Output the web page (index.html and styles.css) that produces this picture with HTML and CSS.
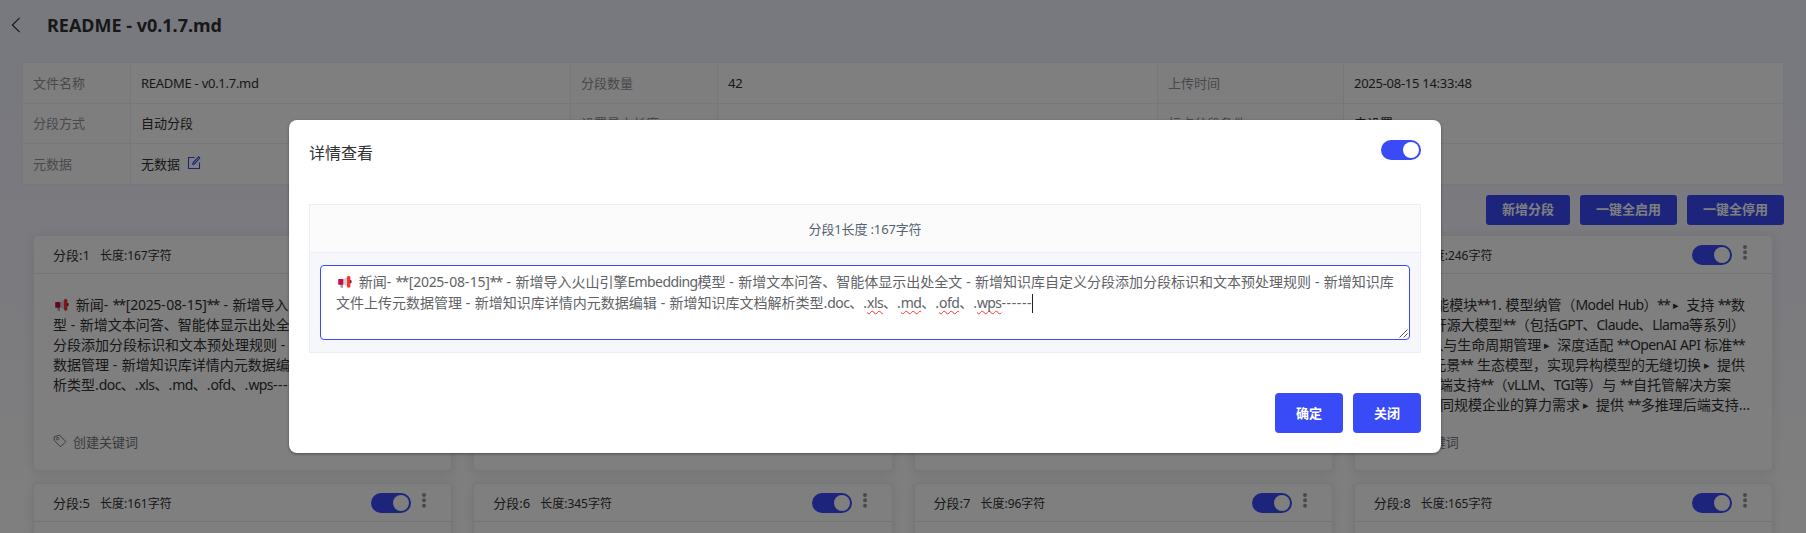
FILE: index.html
```html
<!DOCTYPE html>
<html lang="zh-CN">
<head>
<meta charset="utf-8">
<title>README - v0.1.7.md</title>
<link rel="stylesheet" href="styles.css">
</head>
<body>
<svg class="defs" width="0" height="0">
  <symbol id="horn" viewBox="0 0 15 15">
    <path d="M2.8 9.5h2.6l.6 4.2H3.6z" fill="#9a9a9a"/>
    <path d="M6 4.5 12 1.2v11.6L6 10z" fill="#d0d0d0"/>
    <rect x=".8" y="4.2" width="5.4" height="6.2" rx=".6" fill="#ca0b4a"/>
    <rect x="13" y="5.4" width="2" height="3.4" rx="1" fill="#212121"/>
    <rect x="10.2" y="1" width="3.6" height="12.6" rx="1.6" fill="#f8312f"/>
  </symbol>
  <symbol id="tag" viewBox="0 0 14 14">
    <path d="M1.2 2.8 6.6 1.2 12.8 7.6 7.6 12.8 1.2 6.4z M4.6 3.4a1.3 1.3 0 1 0 .01 0z" fill="none" stroke="#73767a" stroke-width="1"/>
  </symbol>
  <symbol id="dots" viewBox="0 0 4 15">
    <circle cx="2" cy="2" r="2"/><circle cx="2" cy="7.3" r="2"/><circle cx="2" cy="12.7" r="2"/>
  </symbol>
</svg>

<div class="page">
  <header class="topbar">
    <svg class="back" width="10" height="16" viewBox="0 0 10 16"><path d="M8.6.8 1.4 8l7.2 7.2" fill="none" stroke="#303133" stroke-width="1.2"/></svg>
    <h1>README - v0.1.7.md</h1>
  </header>

  <div class="info">
    <div class="key">文件名称</div><div class="latin">README - v0.1.7.md</div><div class="key">分段数量</div><div class="latin">42</div><div class="key">上传时间</div><div class="latin">2025-08-15 14:33:48</div>
    <div class="key">分段方式</div><div>自动分段</div><div class="key">设置最大长度</div><div></div><div class="key">标点分段条件</div><div>未设置</div>
    <div class="key">元数据</div><div class="wide">无数据<svg class="edit" width="14" height="14" viewBox="0 0 14 14"><path d="M7.5 1.5h-6v11h11v-6M5.8 8.4 6.2 6.6 11.6.9l1.2 1.2-5.4 5.8z" fill="none" stroke="#384bf7" stroke-width="1.1"/></svg></div>
  </div>

  <div class="actions"><button>新增分段</button><button>一键全启用</button><button>一键全停用</button></div>

  <main class="cards">
    <section class="card">
      <div class="head"><b>分段:1</b><i>长度:167字符</i><span class="switch"></span><svg class="more"><use href="#dots"/></svg></div>
      <div class="text">
        <div><svg class="horn"><use href="#horn"/></svg> 新闻- **[2025-08-15]** - 新增导入火山引擎</div>
        <div>型 - 新增文本问答、智能体显示出处全文</div>
        <div>分段添加分段标识和文本预处理规则 - 新增</div>
        <div>数据管理 - 新增知识库详情内元数据编辑</div>
        <div>析类型.doc、.xls、.md、.ofd、.wps------</div>
      </div>
      <div class="foot"><svg class="tag"><use href="#tag"/></svg>创建关键词</div>
    </section>
    <section class="card"></section>
    <section class="card"></section>
    <section class="card">
      <div class="head"><b>分段:4</b><i>长度:246字符</i><span class="switch"></span><svg class="more"><use href="#dots"/></svg></div>
      <div class="text tail">
        <div>功能模块**1. 模型纳管（Model Hub）**<em>▸</em>支持 **数</div>
        <div>开源大模型**（包括GPT、Claude、Llama等系列）</div>
        <div>入与生命周期管理<em>▸</em>深度适配 **OpenAI API 标准**</div>
        <div>元景** 生态模型，实现异构模型的无缝切换<em>▸</em>提供</div>
        <div>后端支持**（vLLM、TGI等）与 **自托管解决方案</div>
        <div>不同规模企业的算力需求<em>▸</em>提供 **多推理后端支持...</div>
      </div>
      <div class="foot"><svg class="tag"><use href="#tag"/></svg>创建关键词</div>
    </section>
    <section class="card"><div class="head"><b>分段:5</b><i>长度:161字符</i><span class="switch"></span><svg class="more"><use href="#dots"/></svg></div></section>
    <section class="card"><div class="head"><b>分段:6</b><i>长度:345字符</i><span class="switch"></span><svg class="more"><use href="#dots"/></svg></div></section>
    <section class="card"><div class="head"><b>分段:7</b><i>长度:96字符</i><span class="switch"></span><svg class="more"><use href="#dots"/></svg></div></section>
    <section class="card"><div class="head"><b>分段:8</b><i>长度:165字符</i><span class="switch"></span><svg class="more"><use href="#dots"/></svg></div></section>
  </main>
</div>

<div class="mask">
  <div class="dialog">
    <div class="dialog-head"><h2>详情查看</h2><span class="switch"></span></div>
    <div class="panel">
      <div class="panel-head">分段1长度 :167字符</div>
      <div class="panel-body">
        <div class="editor">
          <div class="line1"><svg class="horn"><use href="#horn"/></svg> 新闻- **[2025-08-15]** - 新增导入火山引擎Embedding模型 - 新增文本问答、智能体显示出处全文 - 新增知识库自定义分段添加分段标识和文本预处理规则 - 新增知识库</div>
          <div class="line2">文件上传元数据管理 - 新增知识库详情内元数据编辑 - 新增知识库文档解析类型.doc、.<u>xls</u>、.<u>md</u>、.<u>ofd</u>、.<u>wps</u>------<span class="caret"></span></div>
          <svg class="grip" width="9" height="9" viewBox="0 0 9 9"><path d="M.5 8.5l8-8M4.5 8.5l4-4" stroke="#555" stroke-width="1" fill="none"/></svg>
        </div>
      </div>
    </div>
    <div class="dialog-foot"><button>确定</button><button>关闭</button></div>
  </div>
</div>
<script src="spacing.js"></script>
</body>
</html>
```
FILE: spacing.js
```js
// Wraps runs of Latin letters, digits, asterisks and hyphens so each can be tracked separately.
const kinds = [[/^[A-Za-z]/, 'lt'], [/^[0-9]/, 'dg'], [/^\*/, 'as'], [/^-/, 'hy']];
document.querySelectorAll('.text, .editor').forEach(function (root) {
  const walker = document.createTreeWalker(root, NodeFilter.SHOW_TEXT);
  const nodes = [];
  while (walker.nextNode()) nodes.push(walker.currentNode);
  nodes.forEach(function (node) {
    const parts = node.data.match(/[A-Za-z]+|[0-9]+|\*+|-+|[^A-Za-z0-9*-]+/g);
    if (!parts) return;
    const out = document.createDocumentFragment();
    parts.forEach(function (part) {
      const kind = kinds.find(function (k) { return k[0].test(part); });
      if (!kind) { out.append(part); return; }
      const span = document.createElement('span');
      span.className = kind[1];
      span.textContent = part;
      out.append(span);
    });
    node.replaceWith(out);
  });
});
```
FILE: styles.css
```css
* { box-sizing: border-box; }
html, body { margin: 0; height: 533px; overflow: hidden; }
body {
  font-family: "Noto Sans", "Noto Sans CJK SC", sans-serif;
  font-size: 13px;
  color: #303133;
}
.defs { position: absolute; }
h1, h2 { margin: 0; }
button {
  border: 0;
  border-radius: 3px;
  background: #384bf7;
  color: #fff;
  font: bold 13px/20px "Noto Sans", "Noto Sans CJK SC", sans-serif;
  padding: 0 16px;
}
.page {
  height: 533px;
  overflow: hidden;
  padding: 0 23px;
  background: linear-gradient(180deg, #f0f0ff 0%, #f2f2ff 30%, #fcfcff 80%, #fff 100%);
}
.topbar { display: flex; align-items: center; height: 50px; margin-left: -12px; }
.topbar h1 { font-size: 18px; line-height: 24px; margin-left: 26px; color: #303133; white-space: nowrap; }
.info {
  margin: 12px 0 0 -1px;
  display: grid;
  grid-template-columns: 108px 440px 147px 440px 186px 440px;
  grid-template-rows: 41px 40px 41px;
  border: 1px solid #ebeef5;
  border-width: 1px 0 0 1px;
  background: #fff;
  width: 1762px;
}
.info > div {
  display: flex;
  align-items: center;
  padding: 0 0 2px 10px;
  border: 1px solid #ebeef5;
  border-width: 0 1px 1px 0;
}
.info .key { color: #909399; background: #fcfcfc; }
.info .wide { grid-column: 2 / 7; }
.info > .latin { padding-bottom: 0; letter-spacing: -.27px; }
.edit { margin-left: 7px; }
.actions { display: flex; justify-content: flex-end; gap: 10px; margin: 10px -1px 0 0; }
.actions button { height: 30px; padding-bottom: 3px; }
.cards {
  margin: 10px 10px 0;
  display: grid;
  grid-template-columns: repeat(4, 1fr);
  grid-auto-rows: 236px;
  gap: 12px 21px;
}
.card {
  background: #fff;
  border: 1px solid #ebeef5;
  border-radius: 4px;
  box-shadow: 0 2px 12px rgba(0, 0, 0, .1);
}
.head {
  height: 38px;
  display: flex;
  align-items: center;
  padding: 0 25px 0 19px;
  border-bottom: 1px solid #e4e7ed;
}
.head b { font-weight: 400; margin-right: 10px; }
.head i { font-style: normal; font-size: 12px; flex: 1; }
.switch {
  width: 40px;
  height: 20px;
  border-radius: 10px;
  background: #384bf7;
  display: flex;
  justify-content: flex-end;
  padding: 2px;
}
.switch::after { content: ""; width: 16px; height: 16px; border-radius: 50%; background: #fff; }
.more { width: 4px; height: 15px; margin: -4px 0 0 11px; fill: #909399; }
.text {
  height: 158px;
  padding: 21px 19px 0;
  font-size: 14px;
  line-height: 20px;
  white-space: nowrap;
}
.text, .editor { word-spacing: .2px; }
.text div { height: 20px; }
.lt { letter-spacing: -.6px; }
.dg { letter-spacing: -.3px; }
.as { letter-spacing: -1.5px; margin: 0 .8px 0 -.4px; }
.hy { letter-spacing: .6px; }
.horn { width: 15px; height: 14px; vertical-align: -2px; margin: 0 3px 0 1px; }
.tail { text-align: right; padding-right: 27px; }
.tail div:nth-child(5) { padding-right: 14px; }
.tail div:nth-child(6) { margin-right: -5px; }
.tail em { font-style: normal; font-size: 11px; display: inline-block; width: 16px; text-align: left; padding-left: 3px; line-height: 14px; vertical-align: 1px; }
.foot { display: flex; align-items: center; padding-left: 19px; height: 18px; color: #73767a; }
.tag { width: 14px; height: 14px; margin-right: 6px; }
.mask {
  position: absolute;
  inset: 0;
  background: rgba(0, 0, 0, .5);
  padding: 120px 365px 0 289px;
}
.dialog {
  height: 333px;
  padding: 20px;
  border-radius: 8px;
  background: #fff;
  box-shadow: 0 1px 3px rgba(0, 0, 0, .4);
}
.dialog-head { display: flex; justify-content: space-between; height: 64px; }
.dialog-head h2 { font-size: 16px; font-weight: 400; line-height: 26px; }
.panel { border: 1px solid #ebeef5; height: 149px; background: #f5f7fb; }
.panel-head {
  height: 48px;
  display: flex;
  align-items: center;
  justify-content: center;
  background: #fbfbfb;
  border-bottom: 1px solid #ebeef5;
  color: #556270;
  letter-spacing: -.15px;
}
.panel-body { padding: 12px 10px; }
.editor {
  position: relative;
  height: 75px;
  border: 1px solid #384bf7;
  border-radius: 4px;
  background: #fff;
  padding: 5px 15px;
  font-size: 14px;
  line-height: 21px;
  color: #606266;
  white-space: nowrap;
}
.editor div { height: 21px; }
.editor u { text-decoration: underline wavy #f33 1px; text-underline-offset: 2px; text-decoration-skip-ink: none; }
.caret { display: inline-block; width: 1px; height: 19px; background: #222; vertical-align: -5px; }
.grip { position: absolute; right: 1px; bottom: 1px; }
.dialog-foot { display: flex; justify-content: flex-end; gap: 10px; margin-top: 40px; }
.dialog-foot button { width: 68px; height: 40px; border-radius: 4px; }
```
